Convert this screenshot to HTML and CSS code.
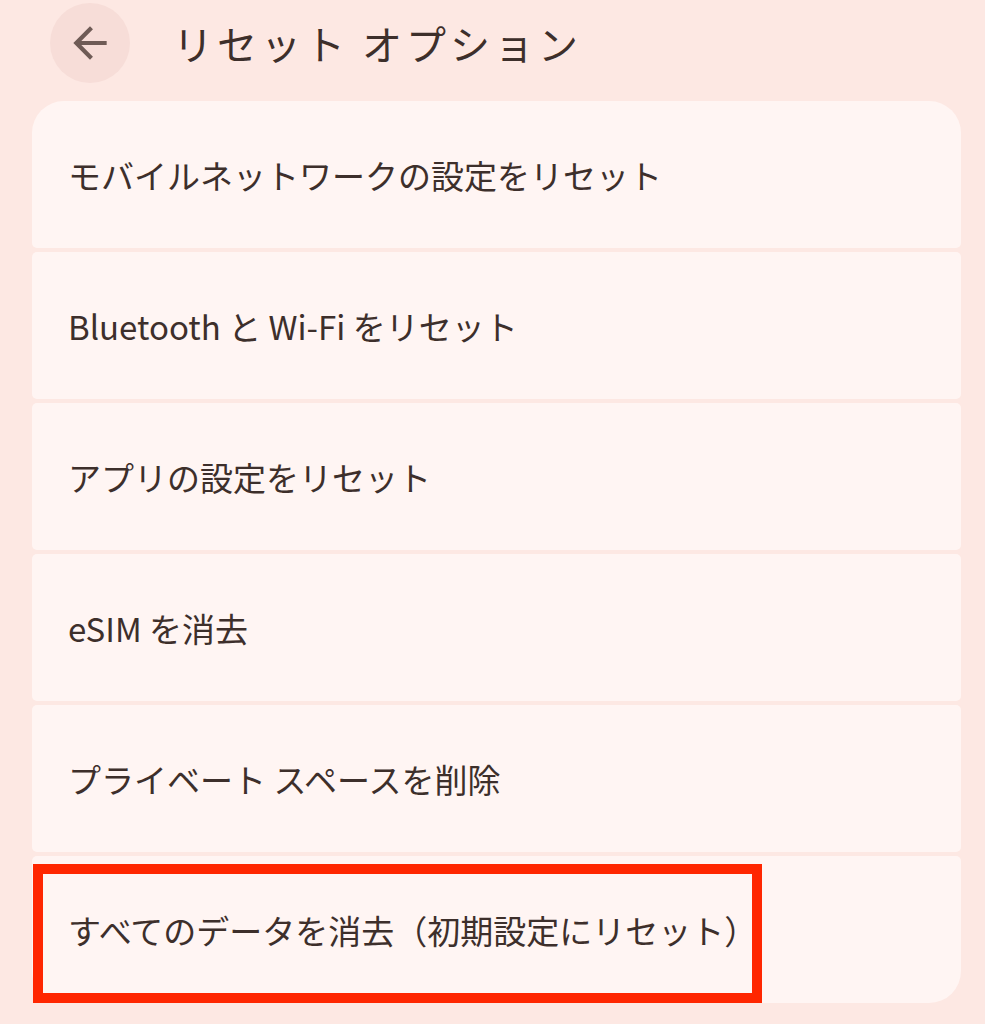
FILE: index.html
```html
<!DOCTYPE html>
<html lang="ja">
<head>
<meta charset="utf-8">
<link rel="stylesheet" href="styles.css">
</head>
<body>
<div class="page">
  <header class="topbar">
    <div class="back">
      <svg viewBox="0 0 24 24" width="50" height="50"><path d="M20 11H7.83l5.59-5.59L12 4l-8 8 8 8 1.41-1.41L7.83 13H20v-2z" fill="#6f5b56"/></svg>
    </div>
    <h1 class="title">リセット オプション</h1>
  </header>
  <div class="list">
    <div class="item first">モバイルネットワークの設定をリセット</div>
    <div class="item">Bluetooth と Wi-Fi をリセット</div>
    <div class="item">アプリの設定をリセット</div>
    <div class="item">eSIM を消去</div>
    <div class="item">プライベート スペースを削除</div>
    <div class="item last">すべてのデータを消去（初期設定にリセット）<div class="highlight"></div></div>
  </div>
</div>
</body>
</html>
```
FILE: styles.css
```css
html, body {
  margin: 0;
  padding: 0;
  background: #fde8e3;
}
.page {
  width: 985px;
  height: 1024px;
  overflow: hidden;
  font-family: "Noto Sans CJK JP", "Noto Sans", sans-serif;
  color: #3d2f2b;
}
.topbar {
  display: flex;
  align-items: center;
  height: 86px;
  padding-left: 50px;
  margin-bottom: 15px;
}
.back {
  width: 80px;
  height: 80px;
  border-radius: 50%;
  background: #f7ddd8;
  display: flex;
  align-items: center;
  justify-content: center;
}
.back svg { display: block; }
.title {
  margin: 0 0 0 43px;
  font-size: 40px;
  font-weight: 400;
  letter-spacing: 4px;
  line-height: 1;
  color: #3d2f2b;
}
.list {
  display: flex;
  flex-direction: column;
  gap: 4px;
  margin-left: 32px;
  width: 929px;
}
.item {
  position: relative;
  height: 147px;
  background: #fff5f3;
  border-radius: 5px;
  display: flex;
  align-items: center;
  padding-left: 36px;
  font-size: 33px;
  font-weight: 400;
  letter-spacing: 0;
  box-sizing: border-box;
}
.item.first {
  border-radius: 32px 32px 5px 5px;
}
.item.last {
  border-radius: 5px 5px 32px 32px;
}
.highlight {
  position: absolute;
  left: 1px;
  top: 8px;
  width: 729px;
  height: 139px;
  border: 10px solid #ff2600;
  box-sizing: border-box;
}
```
